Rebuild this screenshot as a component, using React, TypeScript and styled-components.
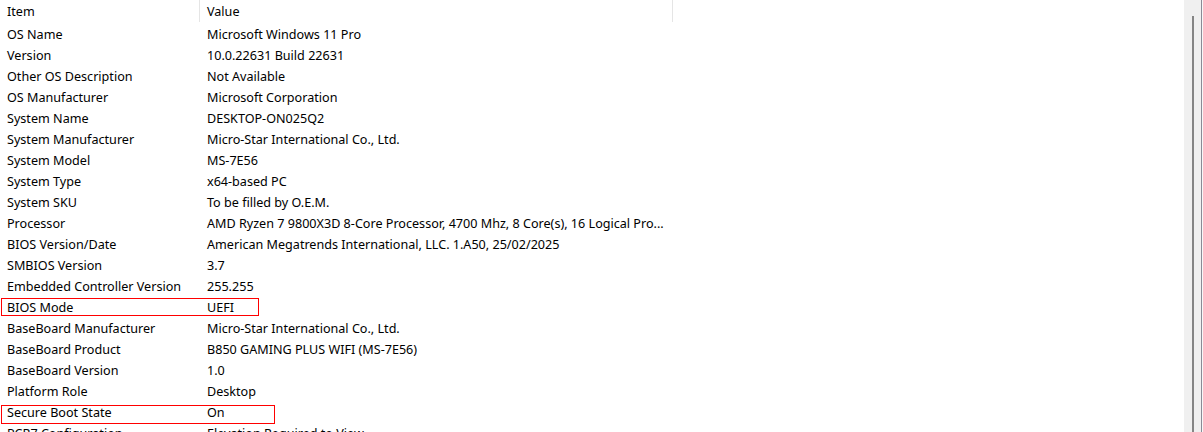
import React from 'react';
import styled, { createGlobalStyle } from 'styled-components';

const GlobalStyle = createGlobalStyle`
  html, body {
    margin: 0;
    padding: 0;
    background: #ffffff;
  }
  body {
    font-family: 'Noto Sans', 'Segoe UI', sans-serif;
    font-size: 12.6px;
    color: #000000;
  }
`;

const Window = styled.div`
  width: 1203px;
  height: 432px;
  display: flex;
  overflow: hidden;
  background: #ffffff;
`;

const ListView = styled.div`
  flex: 1;
  display: flex;
  flex-direction: column;
  min-width: 0;
`;

const HeaderRow = styled.div`
  display: grid;
  grid-template-columns: 200px 473px 1fr;
  height: 24px;
  flex: none;
`;

const HeaderCell = styled.div<{ $divider?: boolean }>`
  padding-left: 7px;
  line-height: 23px;
  height: 22px;
  border-right: ${(p) => (p.$divider ? '1px solid #e5e5e5' : 'none')};
  white-space: nowrap;
`;

const Row = styled.div`
  position: relative;
  display: grid;
  grid-template-columns: 200px 473px 1fr;
  height: 21px;
  flex: none;
`;

const Cell = styled.div`
  padding-left: 7px;
  padding-right: 2px;
  line-height: 21px;
  white-space: nowrap;
  overflow: hidden;
`;

const Highlight = styled.div<{ $width: number; $top: number; $height: number }>`
  position: absolute;
  left: 1px;
  top: ${(p) => p.$top}px;
  width: ${(p) => p.$width}px;
  height: ${(p) => p.$height}px;
  border: 1px solid #ff0000;
  box-sizing: border-box;
  pointer-events: none;
`;

const ScrollTrack = styled.div`
  width: 17px;
  flex: none;
  background: #f0f0f0;
  display: flex;
  justify-content: center;
  padding-top: 16px;
  box-sizing: border-box;
`;

const ScrollThumb = styled.div`
  width: 2px;
  height: 100%;
  background: #858585;
`;

const WindowEdge = styled.div`
  width: 2px;
  flex: none;
  border-left: 1px solid #8a8a96;
  box-sizing: border-box;
  background: #f7f7f7;
`;

type Item = {
  name: string;
  value: string;
  box?: { width: number; top: number; height: number };
};

const items: Item[] = [
  { name: 'OS Name', value: 'Microsoft Windows 11 Pro' },
  { name: 'Version', value: '10.0.22631 Build 22631' },
  { name: 'Other OS Description', value: 'Not Available' },
  { name: 'OS Manufacturer', value: 'Microsoft Corporation' },
  { name: 'System Name', value: 'DESKTOP-ON025Q2' },
  { name: 'System Manufacturer', value: 'Micro-Star International Co., Ltd.' },
  { name: 'System Model', value: 'MS-7E56' },
  { name: 'System Type', value: 'x64-based PC' },
  { name: 'System SKU', value: 'To be filled by O.E.M.' },
  {
    name: 'Processor',
    value: 'AMD Ryzen 7 9800X3D 8-Core Processor, 4700 Mhz, 8 Core(s), 16 Logical Pro...',
  },
  {
    name: 'BIOS Version/Date',
    value: 'American Megatrends International, LLC. 1.A50, 25/02/2025',
  },
  { name: 'SMBIOS Version', value: '3.7' },
  { name: 'Embedded Controller Version', value: '255.255' },
  { name: 'BIOS Mode', value: 'UEFI', box: { width: 258, top: 1, height: 18 } },
  { name: 'BaseBoard Manufacturer', value: 'Micro-Star International Co., Ltd.' },
  { name: 'BaseBoard Product', value: 'B850 GAMING PLUS WIFI (MS-7E56)' },
  { name: 'BaseBoard Version', value: '1.0' },
  { name: 'Platform Role', value: 'Desktop' },
  {
    name: 'Secure Boot State',
    value: 'On',
    box: { width: 274, top: 3, height: 19 },
  },
  { name: 'PCR7 Configuration', value: 'Elevation Required to View' },
];

const App = () => {
  return (
    <>
      <GlobalStyle />
      <Window>
        <ListView>
          <HeaderRow>
            <HeaderCell $divider>Item</HeaderCell>
            <HeaderCell $divider>Value</HeaderCell>
            <HeaderCell />
          </HeaderRow>
          {items.map((item) => (
            <Row key={item.name}>
              <Cell>{item.name}</Cell>
              <Cell>{item.value}</Cell>
              <Cell />
              {item.box && (
                <Highlight
                  $width={item.box.width}
                  $top={item.box.top}
                  $height={item.box.height}
                />
              )}
            </Row>
          ))}
        </ListView>
        <ScrollTrack>
          <ScrollThumb />
        </ScrollTrack>
        <WindowEdge />
      </Window>
    </>
  );
};

export default App;
